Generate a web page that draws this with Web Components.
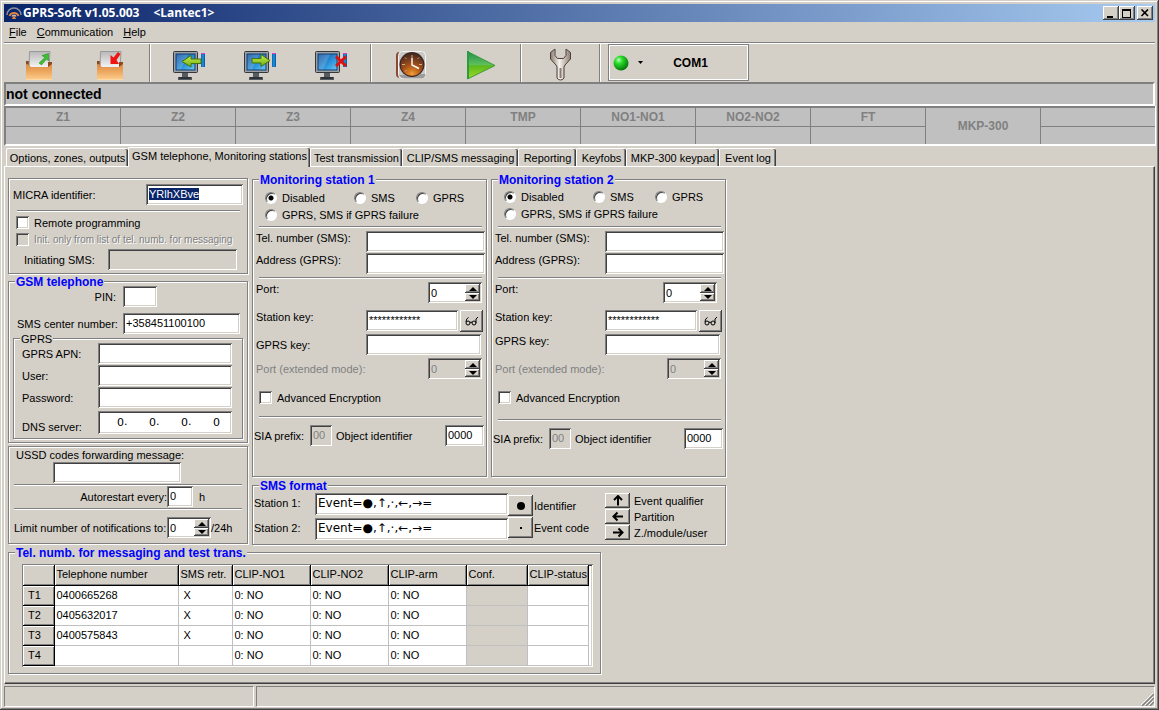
<!DOCTYPE html>
<html lang="en">
<head>
<meta charset="utf-8">
<title>GPRS-Soft</title>
<style>
  html, body {
    margin: 0;
    min-height: 100%;
  }
  body {
    --face: #d4d0c8;
    --light: #ffffff;
    --shade: #808080;
    --dark: #404040;
    --band: #c0c0c0;
    --navy: #0a246a;
    background: var(--face);
    color: #000;
    font: 11px/14px "Liberation Sans", Arial, sans-serif;
  }
</style>
</head>
<body>
<app-window></app-window>

<script>
// rules that every control shares, put in front of each component's own styles
const baseStyles = `
  *, *::before, *::after { box-sizing: border-box; }
  label { white-space: nowrap; }
  button {
    font: inherit;
    color: inherit;
    margin: 0;
    padding: 0;
    border: 0;
    background: var(--face);
  }
  .raised {
    display: inline-flex;
    align-items: center;
    justify-content: center;
    flex: none;
    box-shadow: inset -1px -1px var(--dark), inset 1px 1px var(--light), inset -2px -2px var(--shade);
  }
  input {
    font: inherit;
    color: inherit;
    margin: 0;
    outline: none;
    border-radius: 0;
  }
  input:not([type="radio"]):not([type="checkbox"]), .sunken {
    min-width: 0;
    height: 21px;
    padding: 0 3px 2px;
    border: 0;
    background: #fff;
    box-shadow: inset 1px 1px var(--shade), inset -1px -1px var(--light), inset 2px 2px var(--dark), inset -2px -2px var(--face);
  }
  input:disabled:not([type="radio"]) {
    background: var(--face) !important;
    color: var(--shade);
  }
  input::selection { background: var(--navy); color: #fff; }
  input[type="checkbox"] {
    appearance: none;
    flex: none;
    width: 13px;
    height: 13px;
    background: #fff;
    box-shadow: inset 1px 1px var(--shade), inset -1px -1px var(--light), inset 2px 2px var(--dark), inset -2px -2px var(--face);
  }
  input[type="radio"] {
    appearance: none;
    flex: none;
    width: 12px;
    height: 12px;
    border: 1px solid;
    border-color: var(--shade) var(--light) var(--light) var(--shade);
    border-radius: 50%;
    background: #fff;
    box-shadow: inset 1px 1px var(--dark);
  }
  input[type="radio"]:checked {
    background: radial-gradient(circle, #000 2px, #fff 3px);
  }
`;

function define(name, markup, setup) {
  const template = document.createElement("template");
  template.innerHTML = markup;
  customElements.define(name, class extends HTMLElement {
    constructor() {
      super();
      this.attachShadow({ mode: "open" });
      this.shadowRoot.appendChild(template.content.cloneNode(true));
    }

    connectedCallback() {
      if (setup) setup(this, this.shadowRoot);
    }
  });
}

/* ---------- small parts ---------- */

define("etched-rule", `
<style>
  :host { display: block; height: 2px; border-top: 1px solid var(--shade); border-bottom: 1px solid var(--light); box-sizing: border-box; }
</style>`);

define("group-box", `
<style>
  :host {
    display: block;
    box-sizing: border-box;
    border: 1px solid var(--shade);
    box-shadow: 1px 1px var(--light), inset 1px 1px var(--light);
  }
  .legend {
    width: fit-content;
    height: 14px;
    margin: -7px 0 -7px 6px;
    padding: 0 1px;
    background: var(--face);
    color: var(--legend-color, #00f);
    font-size: var(--legend-size, 12px);
    font-weight: var(--legend-weight, bold);
    white-space: nowrap;
  }
  .legend:empty { display: none; }
</style>
<div class="legend" id="legend"></div>
<slot></slot>`, (el, root) => {
  const legend = root.getElementById("legend");
  legend.textContent = el.getAttribute("legend") || "";
  el.setAttribute("role", "group");
  if (legend.textContent) el.setAttribute("aria-label", legend.textContent);
});

define("text-field", `
<style>${baseStyles}
  :host { display: flex; align-items: var(--label-align, center); }
  label { width: var(--label-width, auto); flex: none; text-align: var(--label-side, left); }
  input { width: var(--input-width, auto); flex: none; }
</style>
<label for="input" id="label"></label>
<input id="input" type="text">
<slot></slot>`, (el, root) => {
  const input = root.getElementById("input");
  root.getElementById("label").textContent = el.getAttribute("label");
  input.type = el.getAttribute("type") || "text";
  input.value = el.getAttribute("value") || "";
  input.disabled = el.hasAttribute("disabled");
});

define("spin-field", `
<style>${baseStyles}
  :host { display: flex; align-items: var(--label-align, center); }
  label { width: var(--label-width, auto); flex: none; }
  :host([disabled]) label { color: var(--shade); }
  .box { display: flex; width: var(--input-width, 54px); padding: 2px !important; flex: none; }
  :host([disabled]) .box { background: var(--face); }
  .box input { flex: 1; width: 0; height: 17px !important; padding: 0 0 0 1px !important; box-shadow: none !important; }
  .arrows { display: flex; flex-direction: column; flex: none; }
  .arrows button { width: 15px; height: 9px; }
  .arrows button + button { height: 8px; }
  svg { display: block; }
</style>
<label for="input" id="label"></label>
<span class="box sunken">
  <input id="input" type="text" inputmode="numeric">
  <span class="arrows">
    <button class="raised" id="up" aria-label="Up"><svg width="8" height="4"><path d="M0 4L4 0L8 4z"/></svg></button>
    <button class="raised" id="down" aria-label="Down"><svg width="8" height="4"><path d="M0 0L4 4L8 0z"/></svg></button>
  </span>
</span>
<slot></slot>`, (el, root) => {
  const input = root.getElementById("input");
  const step = (n) => {
    if (!input.disabled) input.value = Math.max(0, Number(input.value) + n);
  };
  root.getElementById("label").textContent = el.getAttribute("label");
  input.value = el.getAttribute("value") || "0";
  input.disabled = el.hasAttribute("disabled");
  root.getElementById("up").addEventListener("click", () => step(1));
  root.getElementById("down").addEventListener("click", () => step(-1));
});

define("check-option", `
<style>${baseStyles}
  :host { display: flex; align-items: center; height: 13px; gap: 5px; }
  :host([disabled]) label { color: var(--shade); text-shadow: 1px 1px var(--light); }
</style>
<input id="input" type="checkbox"><label for="input"><slot></slot></label>`, (el, root) => {
  root.getElementById("input").disabled = el.hasAttribute("disabled");
});

/* ---------- window chrome ---------- */

define("title-bar", `
<style>${baseStyles}
  :host {
    display: flex;
    align-items: center;
    height: 18px;
    padding: 0 2px;
    background: linear-gradient(90deg, #0a246a, #a6caf0);
    color: #fff;
    font: bold 12px/18px "Open Sans", "Noto Sans", sans-serif;
    white-space: nowrap;
  }
  .title { margin-left: 1px; }
  .project { margin-left: 14px; flex: 1; }
  button { width: 16px; height: 14px; }
  button:last-child { margin-left: 2px; }
</style>
<svg width="16" height="16" viewBox="0 0 16 16" fill="none">
  <path d="M1 10A7 7 0 0 1 15 10" stroke="#8c8f9c" stroke-width="1.6"/>
  <path d="M3.500 11A4.800 4.800 0 0 1 12.500 11" stroke="#e8873a" stroke-width="1.8"/>
  <path d="M6 11.500A2.200 2.200 0 0 1 10 11.500" stroke="#d9d2cc" stroke-width="1.2"/>
  <path d="M8 10L10 14H6z" fill="#e8873a"/>
</svg>
<span class="title">GPRS-Soft v1.05.003</span>
<span class="project">&lt;Lantec1&gt;</span>
<button class="raised" aria-label="Minimize"><svg width="10" height="9"><path d="M1 7h6v2H1z"/></svg></button>
<button class="raised" aria-label="Maximize"><svg width="10" height="9"><path d="M0 0h9v9H0zM1 2v6h7V2z" fill-rule="evenodd"/></svg></button>
<button class="raised" aria-label="Close"><svg width="10" height="8"><path d="M1.500 0.500L8 7M8 0.500L1.500 7" stroke="#000" stroke-width="1.600"/></svg></button>`);

define("menu-bar", `
<style>${baseStyles}
  :host {
    display: flex;
    align-items: center;
    gap: 10px;
    height: 22px;
    padding: 0 5px 2px;
    box-sizing: border-box;
    border-bottom: 1px solid var(--light);
    box-shadow: inset 0 -1px var(--shade);
  }
</style>
<button><u>F</u>ile</button>
<button><u>C</u>ommunication</button>
<button><u>H</u>elp</button>`);

const monitor = (extra) => `
<svg width="33" height="29" viewBox="0 0 33 29">
  <path d="M9 22h6v4h4v3H5v-3h4z" fill="#555b60"/>
  <path d="M6 27h12" stroke="#22262a" stroke-width="1.500"/>
  <rect x="0.500" y="0.500" width="24" height="21" rx="1" fill="#9aa0a4" stroke="#33383c"/>
  <rect x="3" y="3" width="19" height="16" fill="url(#screen)" stroke="#123a6e" stroke-width="1"/>
  <path d="M3.500 3.500H15L8 18.500H3.500z" fill="#fff" opacity=".18"/>
  <rect x="28" y="2" width="4" height="14" fill="url(#stick)"/>
  <path d="M28 2.500h4" stroke="#e83cc8"/>
  ${extra}
</svg>`;

const folder = (arrow) => `
<svg width="27" height="29" viewBox="0 0 27 29">
  <path d="M0 10h6v8H0z" fill="#8a4b1c"/>
  <path d="M3.500 0.500H24L23 18H3z" fill="url(#paper)" stroke="#9a9a9a"/>
  <path d="M22 11h4v6h-4z" fill="#8a4b1c"/>
  <path d="M0 14Q0 12.500 1.500 13L5 16H22L26 13V28H0z" fill="url(#card)"/>
  <path d="M0 28.500h26" stroke="#ffd9a4"/>
  ${arrow}
</svg>`;

define("tool-bar", `
<style>${baseStyles}
  :host { display: flex; height: 38px; }
  button { width: 71px; height: 38px; padding-top: 4px; display: flex; align-items: center; justify-content: center; flex: none; }
  .rule { width: 2px; margin: 0 3px; border-left: 1px solid var(--shade); border-right: 1px solid var(--light); flex: none; }
  .port {
    display: flex;
    align-items: center;
    width: 141px;
    height: 37px;
    margin-left: 4px;
    padding-left: 4px;
    border: 1px solid var(--shade);
    box-shadow: inset 1px 1px var(--light), inset -1px -1px var(--light);
    flex: none;
  }
  .port button { width: auto; height: 24px; padding: 0; gap: 9px; }
  .port b { flex: 1; text-align: center; font-size: 12px; padding-right: 10px; }
  .defs { position: absolute; width: 0; height: 0; }
</style>
<svg class="defs" aria-hidden="true">
  <linearGradient id="screen" x2="1" y2="1"><stop stop-color="#0c4a9c"/><stop offset=".6" stop-color="#2d96dc"/><stop offset="1" stop-color="#6cc9f4"/></linearGradient>
  <linearGradient id="stick" x2="1"><stop stop-color="#0b62b0"/><stop offset=".5" stop-color="#1a96e0"/><stop offset="1" stop-color="#0a4f96"/></linearGradient>
  <linearGradient id="paper" x2="0" y2="1"><stop stop-color="#b8b8b8"/><stop offset="1" stop-color="#fafafa"/></linearGradient>
  <linearGradient id="card" x2="0" y2="1"><stop stop-color="#d98b45"/><stop offset=".5" stop-color="#eda75e"/><stop offset="1" stop-color="#fbc98a"/></linearGradient>
  <linearGradient id="leaf" x2="0" y2="1"><stop stop-color="#c6ee4a"/><stop offset="1" stop-color="#6fae12"/></linearGradient>
  <linearGradient id="go" x2="0" y2="1"><stop stop-color="#1f8f4c"/><stop offset=".48" stop-color="#5fc05c"/><stop offset=".52" stop-color="#5cb81c"/><stop offset="1" stop-color="#a0dc28"/></linearGradient>
  <linearGradient id="steel" x2="1"><stop stop-color="#8a7c70"/><stop offset=".45" stop-color="#f6f2ee"/><stop offset="1" stop-color="#8d7f72"/></linearGradient>
  <radialGradient id="dial" cx=".5" cy=".95" r=".9"><stop stop-color="#f79a2c"/><stop offset=".5" stop-color="#a4501a"/><stop offset="1" stop-color="#4a2a20"/></radialGradient>
  <radialGradient id="led" cx=".35" cy=".3" r=".7"><stop stop-color="#b6ffb0"/><stop offset=".35" stop-color="#2bdc2b"/><stop offset="1" stop-color="#067a0c"/></radialGradient>
</svg>
<button aria-label="Open">${folder('<path d="M13 12L19 6.500L16 4.500L22.500 2.500V10L20.500 8L15.500 14z" fill="#3fbe30" stroke="#178a18" stroke-width=".5"/>')}</button>
<button aria-label="Save">${folder('<path d="M21 1L16.500 6.500L13.500 4V13H22L19.500 9L23.500 3z" fill="#f01414"/>')}</button>
<span class="rule"></span>
<button aria-label="Read from device">${monitor('<path d="M9 10.500L18 4.500V8H28V12.500H18V16z" fill="url(#leaf)" stroke="#43710c"/>')}</button>
<button aria-label="Write to device">${monitor('<path d="M26 9.500L17 3.500V7.500H8V12H17V15.500z" fill="url(#leaf)" stroke="#43710c"/>')}</button>
<button aria-label="Disconnect">${monitor('<path d="M21 5.500L31 15M31 5.500L21 15" stroke="#e01010" stroke-width="3"/>')}</button>
<span class="rule"></span>
<button aria-label="Clock">
  <svg width="30" height="28" viewBox="0 0 30 28">
    <path d="M3 1Q0 1 0 5V23Q0 27 4 27H8V1z" fill="#8c4a34"/>
    <rect x="2.500" y="0.500" width="27" height="27" rx="4" fill="#c8c8c6" stroke="#f4f4f2"/>
    <path d="M3 24Q5 27.500 9 27.500H26Q29 27 29.500 23" fill="#9b9b9b"/>
    <circle cx="16" cy="13.500" r="12.500" fill="#3c2420"/>
    <circle cx="16" cy="13.500" r="11.300" fill="url(#dial)"/>
    <path d="M16 4v3M16 20.500v3M6 13.500h3M23 13.500h3M9 6.500l1.500 1.500M23 6.500l-1.500 1.500M9 20.500l1.500-1.500" stroke="#d9a878" stroke-width="1"/>
    <path d="M16 7V14L23 17.500" stroke="#fff" stroke-width="1.400" fill="none"/>
  </svg>
</button>
<button aria-label="Start">
  <svg width="29" height="29" viewBox="0 0 29 29">
    <path d="M0.500 0.500L28 14.500L0.500 28z" fill="url(#go)" stroke="#3c9a3a"/>
    <path d="M1 0v28" stroke="#2e9a42" stroke-width="2"/>
  </svg>
</button>
<span class="rule"></span>
<button aria-label="Settings">
  <svg width="24" height="34" viewBox="0 0 24 34">
    <path d="M6 1L1.500 4.500V11L7 17L8 19V30Q9 32 11.500 32Q14 32 15 30V19L16 17L21.500 11V4.500L17 1V7.500L14.500 10.500H8.500L6 7.500z" fill="url(#steel)" stroke="#4c4038" stroke-width="1"/>
    <path d="M11.500 20v10" stroke="#8a7c70" stroke-width="2"/>
  </svg>
</button>
<span class="rule"></span>
<div class="port">
  <button aria-label="Choose port">
    <svg width="16" height="16"><circle cx="8" cy="8" r="7.500" fill="url(#led)"/></svg>
    <svg width="5" height="3"><path d="M0 0h5L2.500 3z"/></svg>
  </button>
  <b>COM1</b>
</div>`);

define("connection-band", `
<style>
  :host {
    display: block;
    box-sizing: border-box;
    height: 24px;
    border: 2px solid;
    border-color: var(--shade) var(--light) var(--light) var(--shade);
    background: var(--band);
    font-size: 14px;
    font-weight: bold;
    line-height: 21px;
  }
</style>
<slot></slot>`);

define("zone-strip", `
<style>
  :host {
    display: grid;
    grid-template-columns: repeat(10, 1fr);
    grid-template-rows: 18px 17px;
    gap: 1px;
    box-sizing: border-box;
    border: 2px solid;
    border-right: 0;
    border-color: var(--shade) var(--light) var(--light) var(--shade);
    background: var(--shade);
    box-shadow: 1px 0 var(--light);
    color: var(--shade);
    font-size: 12px;
    font-weight: bold;
    line-height: 18px;
    text-align: center;
  }
  span { background: var(--band); }
  .tall { grid-row: 1 / 3; grid-column: 9; line-height: 36px; }
</style>`, (el, root) => {
  const zones = el.getAttribute("zones").split(",");
  for (const zone of zones) {
    const cell = document.createElement("span");
    cell.textContent = zone;
    if (zone === "MKP-300") cell.className = "tall";
    root.appendChild(cell);
  }
  // second row, one empty reading under each single cell
  for (let i = 1; i < zones.length; i++) root.appendChild(document.createElement("span"));
});

define("tab-strip", `
<style>${baseStyles}
  :host {
    display: grid;
    grid-template-columns: 122px 182px 92px 116px 58px 50px 93px 57px;
    align-items: end;
    height: 20px;
    padding-left: 2px;
  }
  button {
    height: 18px;
    border-top: 1px solid var(--light);
    border-left: 1px solid var(--light);
    border-radius: 2px 2px 0 0;
    box-shadow: inset -1px 0 var(--dark), inset -2px 0 var(--shade);
    white-space: nowrap;
  }
  /* the chosen tab covers the top line of the page below */
  button[aria-selected="true"] { height: 20px; margin-bottom: -1px; padding-bottom: 3px; z-index: 1; }
</style>`, (el, root) => {
  el.setAttribute("role", "tablist");
  el.getAttribute("tabs").split("|").forEach((name, i) => {
    const tab = document.createElement("button");
    tab.textContent = name;
    tab.setAttribute("role", "tab");
    tab.setAttribute("aria-selected", String(i === Number(el.getAttribute("selected"))));
    tab.addEventListener("click", () => {
      for (const other of root.querySelectorAll("button")) {
        other.setAttribute("aria-selected", String(other === tab));
      }
    });
    root.appendChild(tab);
  });
});

define("status-bar", `
<style>
  :host { display: flex; gap: 2px; height: 21px; margin-top: 2px; }
  span { box-sizing: border-box; border: 1px solid; border-color: var(--shade) var(--light) var(--light) var(--shade); }
  .first { width: 250px; }
  .rest { flex: 1; display: flex; justify-content: flex-end; align-items: flex-end; }
</style>
<span class="first"></span>
<span class="rest">
  <svg width="13" height="13" stroke-width="1.500"><path d="M1 13L13 1M5 13L13 5M9 13L13 9" stroke="#808080"/><path d="M0 12L12 0M4 12L12 4M8 12L12 8" stroke="#fff" stroke-width=".8"/></svg>
</span>`);

/* ---------- form panels ---------- */

define("identity-panel", `
<style>${baseStyles}
  group-box { padding: 5px 3px 3px 4px; }
  .id { --label-width: 133px; --input-width: 97px; }
  etched-rule { margin: 5px 4px 4px; }
  check-option { margin: 0 0 4px 3px; }
  check-option[disabled] { font-size: 10px; }
  .sms { --label-width: 84px; --input-width: 129px; margin: -1px 0 0 11px; }
</style>
<group-box>
  <text-field class="id" id="ident" label="MICRA identifier:" value="YRlhXBve"></text-field>
  <etched-rule></etched-rule>
  <check-option>Remote programming</check-option>
  <check-option disabled>Init. only from list of tel. numb. for messaging</check-option>
  <text-field class="sms" label="Initiating SMS:" disabled></text-field>
</group-box>`, (el, root) => {
  const input = root.getElementById("ident").shadowRoot.getElementById("input");
  input.focus();
  input.select();
});

define("address-field", `
<style>${baseStyles}
  :host { display: flex; align-items: flex-end; }
  label { width: 76px; }
  .box { display: flex; width: 134px; height: 23px !important; padding: 2px 12px 2px 0 !important; font: 11px/18px "DejaVu Sans", sans-serif; }
  .box input { flex: 1; width: 0; height: 19px !important; padding: 0 !important; text-align: right; box-shadow: none !important; background: none !important; }
  .box span { width: 6px; }
</style>
<label for="a">DNS server:</label>
<span class="box sunken">
  <input id="a" value="0"><span>.</span>
  <input aria-label="Second part" value="0"><span>.</span>
  <input aria-label="Third part" value="0"><span>.</span>
  <input aria-label="Fourth part" value="0">
</span>`);

define("gsm-panel", `
<style>${baseStyles}
  .outer { padding-bottom: 3px; }
  .pin { --label-width: 107px; --label-side: right; --input-width: 34px; gap: 7px; margin-top: 4px; }
  .center { --label-width: 106px; --input-width: 117px; margin: 6px 0 4px 8px; }
  .inner {
    --legend-color: #000;
    --legend-weight: normal;
    --legend-size: 11px;
    margin: 0 4px;
    padding-bottom: 4px;
  }
  .rows { display: grid; gap: 1px; padding: 4px 0 0 8px; --label-width: 76px; --input-width: 134px; }
  address-field { margin-top: 2px; }
</style>
<group-box class="outer" legend="GSM telephone">
  <text-field class="pin" label="PIN:"></text-field>
  <text-field class="center" label="SMS center number:" value="+358451100100"></text-field>
  <group-box class="inner" legend="GPRS">
    <div class="rows">
      <text-field label="GPRS APN:"></text-field>
      <text-field label="User:"></text-field>
      <text-field label="Password:" type="password"></text-field>
      <address-field></address-field>
    </div>
  </group-box>
</group-box>`);

define("notify-panel", `
<style>${baseStyles}
  group-box { padding: 1px 5px 5px; }
  .message { margin: 0 39px; width: 128px; display: block; }
  .title { display: block; margin-left: 2px; }
  etched-rule { margin-top: 1px; }
  .restart { --label-width: 153px; --label-side: right; --input-width: 26px; }
  .limit { --label-width: 153px; --input-width: 44px; margin-top: 7px; }
  .unit { margin-left: 6px; }
</style>
<group-box>
  <label class="title" for="ussd">USSD codes forwarding message:</label>
  <input class="message" id="ussd" type="text">
  <etched-rule></etched-rule>
  <text-field class="restart" label="Autorestart every:" value="0"><span class="unit">h</span></text-field>
  <etched-rule></etched-rule>
  <spin-field class="limit" label="Limit number of notifications to:" value="0">/24h</spin-field>
</group-box>`);

define("station-panel", `
<style>${baseStyles}
  :host { display: block; }
  group-box { height: 298px; }
  .modes { display: grid; grid-template-columns: 89px 62px auto; row-gap: 3px; padding: var(--modes-pad, 11px 0 1px 12px); }
  .modes span { display: flex; align-items: center; gap: 5px; height: 14px; }
  .wide { grid-column: 1 / 4; }
  .rows { padding-left: 3px; }
  .rows > * { margin-bottom: 1px; }
  .contact { --label-width: 110px; --input-width: 119px; --label-align: flex-start; }
  .keys { --label-width: 110px; --label-align: flex-start; }
  .rows .port { --label-width: var(--port-label, 172px); --label-align: flex-start; margin-bottom: 7px; }
  .rows .ext { --label-width: 172px; margin-top: 3px; }
  .station { --input-width: 92px; }
  .gprs { --input-width: 115px; --label-align: var(--gprs-align, center); padding-top: 1px; }
  etched-rule { margin: 3px 4px 3px 6px; }
  .reveal { width: 23px; height: 22px; margin-left: 2px; }
  check-option { margin: 12px 0 var(--footer-gap, 12px) 6px; }
  .footer { display: flex; align-items: center; margin-top: 7px; padding: 0 2px 0 1px; }
  .footer .sia { --label-width: 56px; --input-width: 22px; }
  .footer .object { --label-width: 109px; --input-width: 39px; margin-left: 4px; }
</style>
<group-box id="box">
  <div class="modes">
    <span><input type="radio" name="mode" id="off" checked><label for="off">Disabled</label></span>
    <span><input type="radio" name="mode" id="sms"><label for="sms">SMS</label></span>
    <span><input type="radio" name="mode" id="gprs"><label for="gprs">GPRS</label></span>
    <span class="wide"><input type="radio" name="mode" id="both"><label for="both">GPRS, SMS if GPRS failure</label></span>
  </div>
  <etched-rule></etched-rule>
  <div class="rows">
    <text-field class="contact" label="Tel. number (SMS):"></text-field>
    <text-field class="contact" label="Address (GPRS):"></text-field>
  </div>
  <etched-rule></etched-rule>
  <div class="rows">
    <spin-field class="port" label="Port:" value="0"></spin-field>
    <text-field class="keys station" label="Station key:" value="************">
      <button class="raised reveal" aria-label="Show key">
        <svg width="13" height="10" fill="none" stroke="#000"><circle cx="3" cy="7" r="2"/><circle cx="9" cy="7" r="2"/><path d="M1 6Q1 2.500 3.500 1.500M5 6.500Q6 5.500 7 6.500M11 7V3L13 1"/></svg>
      </button>
    </text-field>
    <text-field class="keys gprs" label="GPRS key:"></text-field>
    <spin-field class="ext" label="Port (extended mode):" value="0" disabled></spin-field>
  </div>
  <check-option>Advanced Encryption</check-option>
  <etched-rule></etched-rule>
  <div class="footer">
    <text-field class="sia" label="SIA prefix:" value="00" disabled></text-field>
    <text-field class="object" label="Object identifier" value="0000"></text-field>
  </div>
</group-box>`, (el, root) => {
  const box = root.getElementById("box");
  box.setAttribute("legend", el.getAttribute("legend"));
  box.connectedCallback();
});

const arrowIcon = (turn) => `
<svg width="12" height="11" viewBox="-6 -5.500 12 11"><path transform="rotate(${turn})" d="M-5 0H4M0.500 -4L4.500 0L0.500 4" fill="none" stroke="#000" stroke-width="2"/></svg>`;

define("format-panel", `
<style>${baseStyles}
  .body { display: grid; grid-template-columns: 254px 97px auto; padding: 7px 0 4px 1px; }
  .inputs, .tokens, .parts { display: grid; align-content: start; }
  .inputs { row-gap: 3px; }
  .inputs label { line-height: 20px; }
  .inputs div { display: grid; grid-template-columns: 61px 193px; }
  .inputs input { height: 22px !important; font: 12px/16px "DejaVu Sans", sans-serif; }
  .tokens { padding-top: 2px; row-gap: 1px; }
  .tokens button { width: 25px; height: 21px; margin-right: 1px; }
  .parts { row-gap: 1px; }
  .parts button { width: 25px; height: 15px; margin-right: 4px; }
  .key { display: flex; align-items: center; white-space: nowrap; }
</style>
<group-box legend="SMS format">
  <div class="body">
    <div class="inputs">
      <div><label for="one">Station 1:</label><input id="one" type="text" value="Event=●,↑,·,←,→="></div>
      <div><label for="two">Station 2:</label><input id="two" type="text" value="Event=●,↑,·,←,→="></div>
    </div>
    <div class="tokens">
      <span class="key"><button class="raised" aria-labelledby="k1"><svg width="8" height="8"><circle cx="4" cy="4" r="4"/></svg></button><span id="k1">Identifier</span></span>
      <span class="key"><button class="raised" aria-labelledby="k2"><svg width="2" height="2"><path d="M0 0h2v2H0z"/></svg></button><span id="k2">Event code</span></span>
    </div>
    <div class="parts">
      <span class="key"><button class="raised" aria-labelledby="k3">${arrowIcon(-90)}</button><span id="k3">Event qualifier</span></span>
      <span class="key"><button class="raised" aria-labelledby="k4">${arrowIcon(180)}</button><span id="k4">Partition</span></span>
      <span class="key"><button class="raised" aria-labelledby="k5">${arrowIcon(0)}</button><span id="k5">Z./module/user</span></span>
    </div>
  </div>
</group-box>`);

define("phone-table", `
<style>${baseStyles}
  group-box { padding-bottom: 6px; }
  .frame {
    height: auto !important;
    width: fit-content;
    margin: 11px 0 0 13px;
    padding: 1px 4px 1px 1px !important;
  }
  table { border-collapse: collapse; table-layout: fixed; width: 565px; }
  th, td { height: 20px; padding: 0 2px 1px; font-weight: normal; text-align: left; white-space: nowrap; }
  td { border-right: 1px solid var(--band); border-bottom: 1px solid var(--band); }
  th {
    background: var(--face);
    border-right: 1px solid #000;
    border-bottom: 1px solid #000;
    box-shadow: inset 1px 1px var(--light), inset -1px -1px var(--shade);
  }
  tbody th { padding-left: 5px; }
  td.mark { padding-left: 5px; }
  td.off { background: var(--face); }
</style>
<group-box legend="Tel. numb. for messaging and test trans.">
  <div class="frame sunken">
    <table>
      <colgroup>
        <col style="width: 31px"><col style="width: 124px"><col style="width: 54px">
        <col style="width: 78px"><col style="width: 78px"><col style="width: 78px">
        <col style="width: 61px"><col style="width: 61px">
      </colgroup>
      <thead><tr><th></th><th>Telephone number</th><th>SMS retr.</th><th>CLIP-NO1</th><th>CLIP-NO2</th><th>CLIP-arm</th><th>Conf.</th><th>CLIP-status</th></tr></thead>
      <tbody id="rows"></tbody>
    </table>
  </div>
</group-box>`, (el, root) => {
  const body = root.getElementById("rows");
  const phones = ["0400665268", "0405632017", "0400575843", ""];
  body.innerHTML = phones.map((phone, i) => `
    <tr><th>T${i + 1}</th><td>${phone}</td><td class="mark">${phone ? "X" : ""}</td>
    <td>0: NO</td><td>0: NO</td><td>0: NO</td><td class="off"></td><td></td></tr>`).join("");
});

/* ---------- the window ---------- */

define("app-window", `
<style>
  :host {
    display: flex;
    flex-direction: column;
    box-sizing: border-box;
    min-height: 100vh;
    padding: 4px 4px 3px;
    background: var(--face);
    box-shadow: inset -1px -1px var(--dark), inset 1px 1px var(--face), inset -2px -2px var(--shade), inset 2px 2px var(--light);
  }
  .page {
    flex: 1;
    padding: 11px 4px 0 3px;
    border: 1px solid var(--light);
    border-right-color: var(--dark);
    border-bottom-color: var(--dark);
    box-shadow: inset -1px -1px var(--shade);
  }
  .columns { display: flex; gap: 4px; }
  .left { width: 240px; display: flex; flex-direction: column; flex: none; }
  gsm-panel { margin: 7px 0 3px; }
  .right { width: 474px; flex: none; }
  .stations { display: flex; gap: 4px; margin: 1px 0 8px; }
  station-panel { flex: 1; }
  station-panel + station-panel {
    --modes-pad: 10px 0 2px 12px;
    --port-label: 168px;
    --gprs-align: flex-start;
    --footer-gap: 15px;
  }
  phone-table { display: block; width: 593px; margin-top: 7px; }
</style>
<title-bar></title-bar>
<menu-bar></menu-bar>
<tool-bar></tool-bar>
<connection-band>not connected</connection-band>
<zone-strip zones="Z1,Z2,Z3,Z4,TMP,NO1-NO1,NO2-NO2,FT,MKP-300,"></zone-strip>
<tab-strip selected="1" tabs="Options, zones, outputs|GSM telephone, Monitoring stations|Test transmission|CLIP/SMS messaging|Reporting|Keyfobs|MKP-300 keypad|Event log"></tab-strip>
<div class="page">
  <div class="columns">
    <div class="left">
      <identity-panel></identity-panel>
      <gsm-panel></gsm-panel>
      <notify-panel></notify-panel>
    </div>
    <div class="right">
      <div class="stations">
        <station-panel legend="Monitoring station 1"></station-panel>
        <station-panel legend="Monitoring station 2"></station-panel>
      </div>
      <format-panel></format-panel>
    </div>
  </div>
  <phone-table></phone-table>
</div>
<status-bar></status-bar>`);
</script>
</body>
</html>
